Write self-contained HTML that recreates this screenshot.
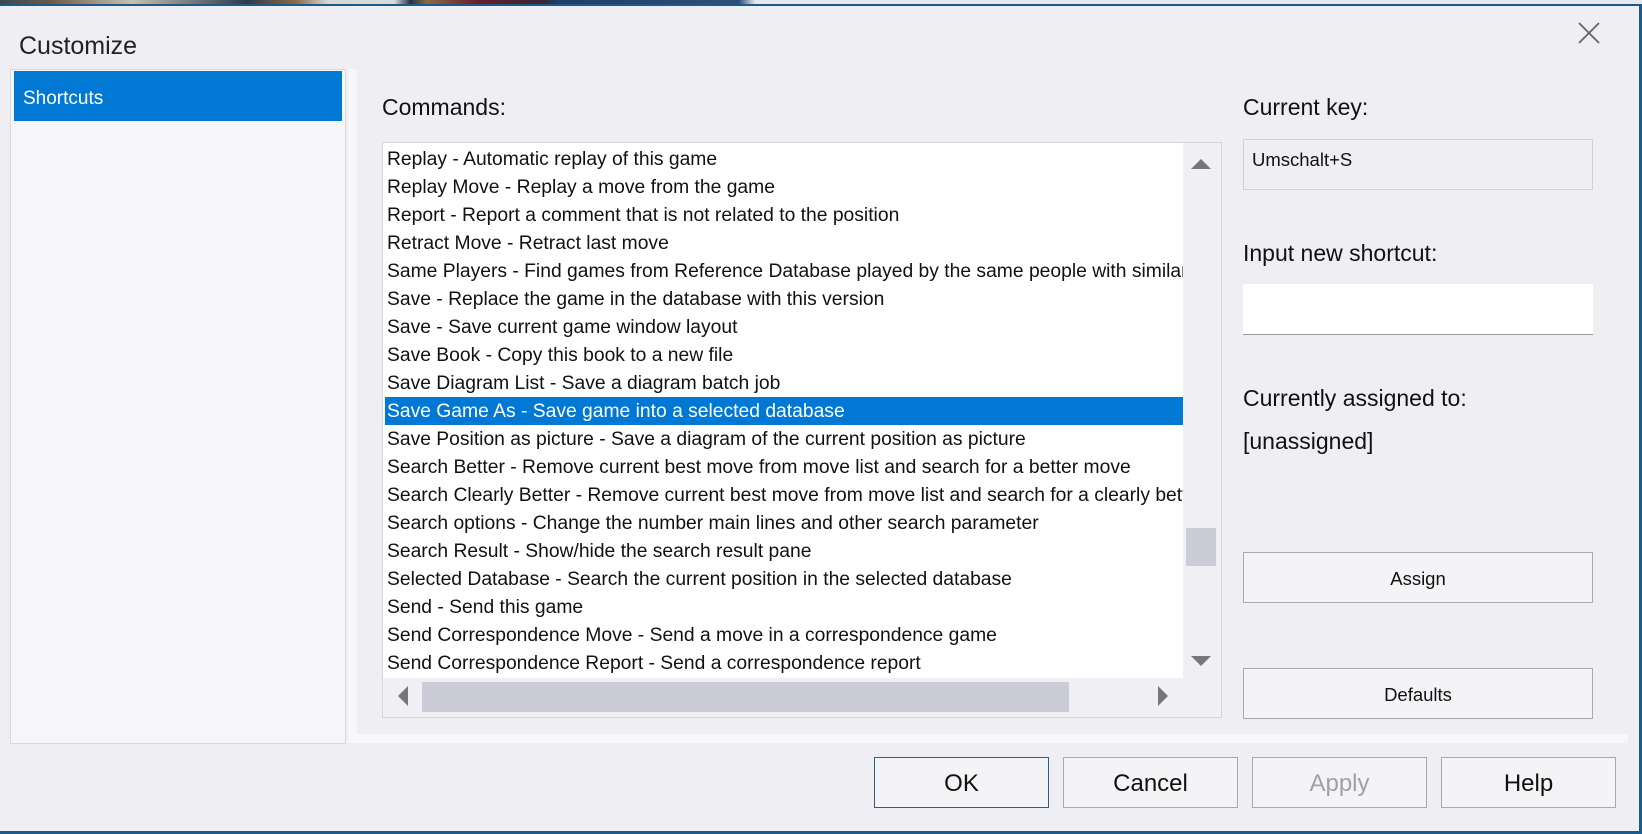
<!DOCTYPE html>
<html><head><meta charset="utf-8"><style>
*{box-sizing:border-box;margin:0;padding:0}
body{width:1642px;height:834px;overflow:hidden;background:#eeeef3;font-family:"Liberation Sans",sans-serif;color:#111;position:relative}
.a{position:absolute}
.btn{position:absolute;background:#f4f4f7;border:1px solid #a9a9ad;display:flex;align-items:center;justify-content:center}
.row{position:absolute;left:2px;right:0;height:28px;line-height:28px;font-size:19.3px;padding-left:2px;white-space:nowrap;overflow:hidden}
</style></head><body>
<div class="a" style="left:0;top:0;width:1642px;height:5px;background:linear-gradient(90deg,#3a4656 0,#6b5a44 3%,#c9c0b0 8%,#2e3a4a 15%,#8a6a44 18%,#d8d8d8 20%,#dadada 24%,#273246 25%,#8a6a44 26%,#6b1f2a 29%,#3a2530 33%,#1f3f6a 34%,#2d4f7a 45%,#e6e8ec 46%,#e6e8ec 100%)"></div>
<div class="a" style="left:0;top:4px;width:1642px;height:2px;background:#1b5a8c"></div>
<div class="a" style="right:0;top:4px;width:3px;height:830px;background:#1b5a8c"></div>
<div class="a" style="left:0;bottom:0;width:1642px;height:3px;background:#1b5a8c"></div>

<div class="a" style="left:19px;top:32px;font-size:25px;color:#222">Customize</div>
<svg class="a" style="left:1578px;top:22px" width="22" height="22"><path d="M1 1L21 21M21 1L1 21" stroke="#666" stroke-width="1.8"/></svg>

<div class="a" style="left:10px;top:69px;width:336px;height:675px;background:#f6f6f8;border:1px solid #d8d8de"></div>
<div class="a" style="left:14px;top:71px;width:328px;height:50px;background:#0078d4;color:#fff;font-size:19px;line-height:56px;padding-left:9px">Shortcuts</div>

<div class="a" style="left:348px;top:69px;width:1280px;height:674px;background:#f7f7f9"></div>
<div class="a" style="left:357px;top:69px;width:1271px;height:665px;background:#eeeef3"></div>

<div class="a" style="left:382px;top:94px;font-size:23px">Commands:</div>
<div class="a" style="left:382px;top:142px;width:840px;height:576px;background:#f0f0f4;border:1px solid #d6d6dc"></div>
<div class="a" style="left:383px;top:143px;width:800px;height:535px;background:#fff;overflow:hidden">
<div class="row" style="top:3px">Replay - Automatic replay of this game</div>
<div class="row" style="top:31px">Replay Move - Replay a move from the game</div>
<div class="row" style="top:59px">Report - Report a comment that is not related to the position</div>
<div class="row" style="top:87px">Retract Move - Retract last move</div>
<div class="row" style="top:115px">Same Players - Find games from Reference Database played by the same people with similar</div>
<div class="row" style="top:143px">Save - Replace the game in the database with this version</div>
<div class="row" style="top:171px">Save - Save current game window layout</div>
<div class="row" style="top:199px">Save Book - Copy this book to a new file</div>
<div class="row" style="top:227px">Save Diagram List - Save a diagram batch job</div>
<div class="row" style="top:254px;line-height:30px;background:#0078d4;color:#fff">Save Game As - Save game into a selected database</div>
<div class="row" style="top:283px">Save Position as picture - Save a diagram of the current position as picture</div>
<div class="row" style="top:311px">Search Better - Remove current best move from move list and search for a better move</div>
<div class="row" style="top:339px">Search Clearly Better - Remove current best move from move list and search for a clearly better</div>
<div class="row" style="top:367px">Search options - Change the number main lines and other search parameter</div>
<div class="row" style="top:395px">Search Result - Show/hide the search result pane</div>
<div class="row" style="top:423px">Selected Database - Search the current position in the selected database</div>
<div class="row" style="top:451px">Send - Send this game</div>
<div class="row" style="top:479px">Send Correspondence Move - Send a move in a correspondence game</div>
<div class="row" style="top:507px">Send Correspondence Report - Send a correspondence report</div>
</div>
<svg class="a" style="left:1191px;top:158px" width="20" height="12"><path d="M0 11L10 1L20 11Z" fill="#777"/></svg>
<svg class="a" style="left:1191px;top:655px" width="20" height="12"><path d="M0 1L10 11L20 1Z" fill="#777"/></svg>
<div class="a" style="left:1186px;top:528px;width:30px;height:38px;background:#cbccd8"></div>
<svg class="a" style="left:397px;top:686px" width="12" height="20"><path d="M11 0L1 10L11 20Z" fill="#777"/></svg>
<svg class="a" style="left:1157px;top:686px" width="12" height="20"><path d="M1 0L11 10L1 20Z" fill="#777"/></svg>
<div class="a" style="left:422px;top:682px;width:647px;height:30px;background:#cbccd8"></div>

<div class="a" style="left:1243px;top:94px;font-size:23px">Current key:</div>
<div class="a" style="left:1243px;top:139px;width:350px;height:51px;border:1px solid #d0d0d8;background:#eeeef3;font-size:18.5px;padding:9px 0 0 8px">Umschalt+S</div>
<div class="a" style="left:1243px;top:240px;font-size:23px">Input new shortcut:</div>
<div class="a" style="left:1243px;top:284px;width:350px;height:51px;background:#fff;border-bottom:1px solid #999"></div>
<div class="a" style="left:1243px;top:385px;font-size:23px">Currently assigned to:</div>
<div class="a" style="left:1243px;top:428px;font-size:23px">[unassigned]</div>
<div class="btn" style="left:1243px;top:552px;width:350px;height:51px;font-size:18.5px;padding-top:3px">Assign</div>
<div class="btn" style="left:1243px;top:668px;width:350px;height:51px;font-size:18.5px;padding-top:3px">Defaults</div>

<div class="btn" style="left:874px;top:757px;width:175px;height:51px;font-size:24px;border-color:#2b5e8e;padding-top:2px">OK</div>
<div class="btn" style="left:1063px;top:757px;width:175px;height:51px;font-size:24px;padding-top:2px">Cancel</div>
<div class="btn" style="left:1252px;top:757px;width:175px;height:51px;font-size:24px;color:#a0a0a6;padding-top:2px">Apply</div>
<div class="btn" style="left:1441px;top:757px;width:175px;height:51px;font-size:24px;padding-top:2px">Help</div>
</body></html>
